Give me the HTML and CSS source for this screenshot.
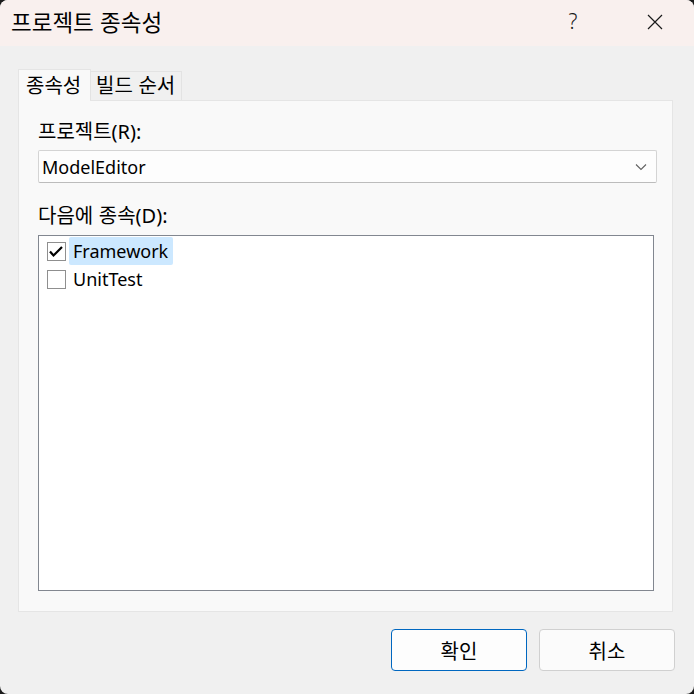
FILE: index.html
```html
<!DOCTYPE html>
<html lang="ko">
<head>
<meta charset="utf-8">
<title>프로젝트 종속성</title>
<link rel="stylesheet" href="styles.css">
</head>
<body>
<div class="window">
  <div class="titlebar">
    <span class="title">프로젝트 종속성</span>
    <span class="help">?</span>
    <span class="close">
      <svg width="16" height="16" viewBox="0 0 16 16"><path d="M1 1 L15 15 M15 1 L1 15" stroke="#1a1a1a" stroke-width="1.2" fill="none"/></svg>
    </span>
  </div>
  <div class="content">
    <div class="tabs">
      <div class="tab active"><span class="ko">종속성</span></div>
      <div class="tab"><span class="ko">빌드 순서</span></div>
    </div>
    <div class="panel">
      <div class="label"><span class="ko">프로젝트</span>(R):</div>
      <div class="combo">
        <span class="combo-text">ModelEditor</span>
        <svg class="chevron" width="12" height="8" viewBox="0 0 12 8"><path d="M1 1.5 L6 6.5 L11 1.5" stroke="#606060" stroke-width="1.1" fill="none"/></svg>
      </div>
      <div class="label label2"><span class="ko">다음에 종속</span>(D):</div>
      <div class="list">
        <div class="item">
          <span class="check checked">
            <svg width="17" height="17" viewBox="0 0 17 17"><path d="M2 8.5 L5.5 12.5 L14 4" stroke="#000" stroke-width="2.2" fill="none"/></svg>
          </span>
          <span class="item-text selected">Framework</span>
        </div>
        <div class="item">
          <span class="check"></span>
          <span class="item-text">UnitTest</span>
        </div>
      </div>
    </div>
    <div class="buttons">
      <div class="btn primary"><span class="ko">확인</span></div>
      <div class="btn"><span class="ko">취소</span></div>
    </div>
  </div>
</div>
</body>
</html>
```

FILE: styles.css
```css
html, body {
  margin: 0;
  padding: 0;
  background: #1c1c1c;
}
body {
  width: 694px;
  height: 694px;
  overflow: hidden;
  font-family: "Noto Sans", "Noto Sans CJK KR", sans-serif;
  color: #000;
}
.ko {
  font-family: "Noto Sans CJK KR", sans-serif;
  font-size: 20px;
}
.window {
  width: 694px;
  height: 694px;
  background: #f0f0f0;
  border-radius: 8px;
  overflow: hidden;
  display: flex;
  flex-direction: column;
}
.titlebar {
  height: 46px;
  background: #f9f0ee;
  display: flex;
  align-items: center;
  padding-left: 11px;
  box-sizing: border-box;
}
.title {
  font-family: "Noto Sans CJK KR", sans-serif;
  font-size: 22.5px;
  flex: 1;
  line-height: 26px;
  margin-top: -4px;
}
.help {
  font-size: 21px;
  font-weight: 300;
  color: #1a1a1a;
  width: 16px;
  line-height: 24px;
  text-align: center;
  margin-right: 66px;
  margin-top: -4px;
}
.close {
  width: 16px;
  height: 16px;
  margin-right: 31px;
  margin-top: -3px;
  display: flex;
}
.content {
  padding: 23px 19px 0 18px;
  display: flex;
  flex-direction: column;
}
.tabs {
  display: flex;
  align-items: flex-end;
  height: 31px;
  position: relative;
  z-index: 1;
}
.tab {
  box-sizing: border-box;
  height: 29px;
  padding: 0 5px 0 5px;
  border: 1px solid #e3e3e3;
  border-bottom: none;
  background: #f0f0f0;
  font-size: 18px;
  line-height: 26px;
  margin-left: -1px;
  white-space: nowrap;
}
.tab.active {
  height: 32px;
  margin-left: 0;
  margin-bottom: -1px;
  background: #f9f9f9;
  border-color: #e5e5e5;
  padding: 0 6px 0 7px;
  line-height: 30px;
  width: 73px;
}
.tab:not(.active) {
  width: 92px;
  padding-left: 5px;
}
.panel {
  box-sizing: border-box;
  width: 655px;
  height: 512px;
  background: #f9f9f9;
  border: 1px solid #e5e5e5;
  padding: 18px 15px 0 19px;
}
.label {
  font-size: 20px;
  line-height: 24px;
  height: 24px;
  white-space: nowrap;
}
.combo {
  box-sizing: border-box;
  margin-top: 7px;
  width: 619px;
  height: 33px;
  background: #fdfdfd;
  border: 1px solid #d4d4d4;
  border-bottom-color: #bcbcbc;
  border-radius: 2px;
  display: flex;
  align-items: center;
  padding-left: 3px;
  padding-right: 9px;
}
.combo-text {
  flex: 1;
  font-size: 18px;
  line-height: 24px;
}
.chevron {
  display: block;
}
.label2 {
  margin-top: 20px;
}
.list {
  box-sizing: border-box;
  margin-top: 8px;
  width: 616px;
  height: 356px;
  background: #fff;
  border: 1px solid #828790;
  padding-top: 1px;
}
.item {
  height: 28px;
  display: flex;
  align-items: center;
  padding-left: 8px;
}
.check {
  box-sizing: border-box;
  width: 19px;
  height: 19px;
  border: 1px solid #8f8f8f;
  background: #fff;
  display: flex;
  align-items: center;
  justify-content: center;
  margin-right: 3px;
}
.check svg {
  display: block;
}
.item-text {
  font-size: 18px;
  line-height: 28px;
  height: 28px;
  padding: 0 5px 0 4px;
  border-radius: 2px;
}
.item-text.selected {
  background: #cce8ff;
}
.buttons {
  display: flex;
  justify-content: flex-end;
  gap: 12px;
  margin-top: 17px;
}
.btn {
  box-sizing: border-box;
  width: 136px;
  height: 42px;
  border: 1px solid #d0d0d0;
  border-radius: 4px;
  background: #fbfbfb;
  font-size: 18px;
  display: flex;
  align-items: center;
  justify-content: center;
}
.btn.primary {
  border: 1.5px solid #0067c0;
  background: #fdfdfd;
}
```
